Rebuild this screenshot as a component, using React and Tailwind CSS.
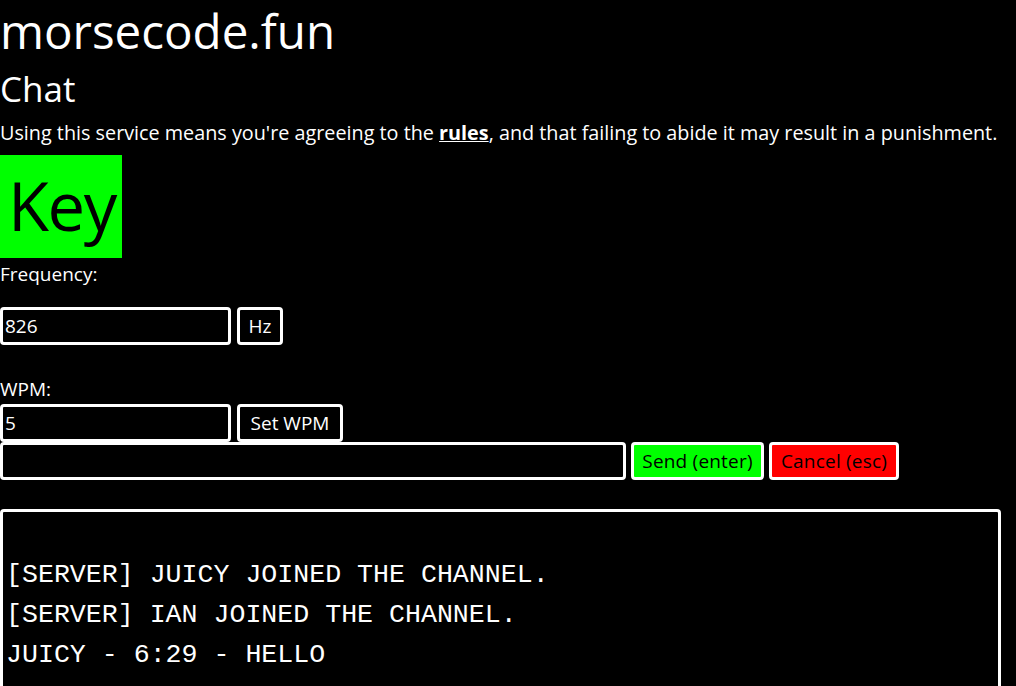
import React, { useState } from 'react';

const messages = [
  '[SERVER] JUICY JOINED THE CHANNEL.',
  '[SERVER] IAN JOINED THE CHANNEL.',
  'JUICY - 6:29 - HELLO',
];

const App = () => {
  const [frequency, setFrequency] = useState('826');
  const [wpm, setWpm] = useState('5');
  const [message, setMessage] = useState('');

  return (
    <div className="min-h-screen bg-black text-white font-['Open_Sans',sans-serif] overflow-hidden">
      <h1 className="text-[47.5px] leading-[62px] h-[62px]">morsecode.fun</h1>
      <h2 className="text-[35px] leading-[54px] h-[52px]">Chat</h2>
      <p className="text-[19.8px] leading-[38px] h-[41px] whitespace-nowrap">
        Using this service means you're agreeing to the <a href="#" className="font-bold underline">rules</a>, and that failing to abide it may result in a punishment.
      </p>

      <div className="w-[122px] h-[103px] bg-[#00ff00] text-black text-[67px] leading-[100px] pl-[8px] tracking-[-1.5px]">Key</div>

      <p className="text-[19px] leading-[32px] h-[49px]">Frequency:</p>
      <div className="flex gap-[6px] h-[38px]">
        <input
          value={frequency}
          onChange={(e) => setFrequency(e.target.value)}
          className="w-[231px] h-[38px] border-[3px] border-white rounded-[4px] bg-black text-white text-[19px] px-[2px] outline-none"
        />
        <button className="w-[46px] h-[38px] border-[3px] border-white rounded-[4px] text-[19px]">Hz</button>
      </div>

      <p className="text-[19px] leading-[30px] h-[59px] pt-[29px]">WPM:</p>
      <div className="flex gap-[6px] h-[38px]">
        <input
          value={wpm}
          onChange={(e) => setWpm(e.target.value)}
          className="w-[231px] h-[38px] border-[3px] border-white rounded-[4px] bg-black text-white text-[19px] px-[2px] outline-none"
        />
        <button className="w-[106px] h-[38px] border-[3px] border-white rounded-[4px] text-[19px]">Set WPM</button>
      </div>
      <div className="flex gap-[5px] h-[38px]">
        <input
          value={message}
          onChange={(e) => setMessage(e.target.value)}
          className="w-[626px] h-[38px] border-[3px] border-white rounded-[4px] bg-black text-white text-[19px] px-[2px] outline-none"
        />
        <button className="w-[133px] h-[38px] border-[3px] border-white rounded-[4px] bg-[#00ff00] text-black text-[19px] tracking-[0.2px]">Send (enter)</button>
        <button className="w-[130px] h-[38px] border-[3px] border-white rounded-[4px] bg-[#ff0000] text-black text-[19px] tracking-[0.2px]">Cancel (esc)</button>
      </div>

      <div className="mt-[29px] w-[1001px] h-[200px] border-[3px] border-white rounded-[4px] pt-[43px] px-[3px] font-['Liberation_Mono',monospace] text-[26.6px] leading-[40px] uppercase">
        {messages.map((m, i) => (
          <div key={i} className="whitespace-pre">{m}</div>
        ))}
      </div>
    </div>
  );
};

export default App;
